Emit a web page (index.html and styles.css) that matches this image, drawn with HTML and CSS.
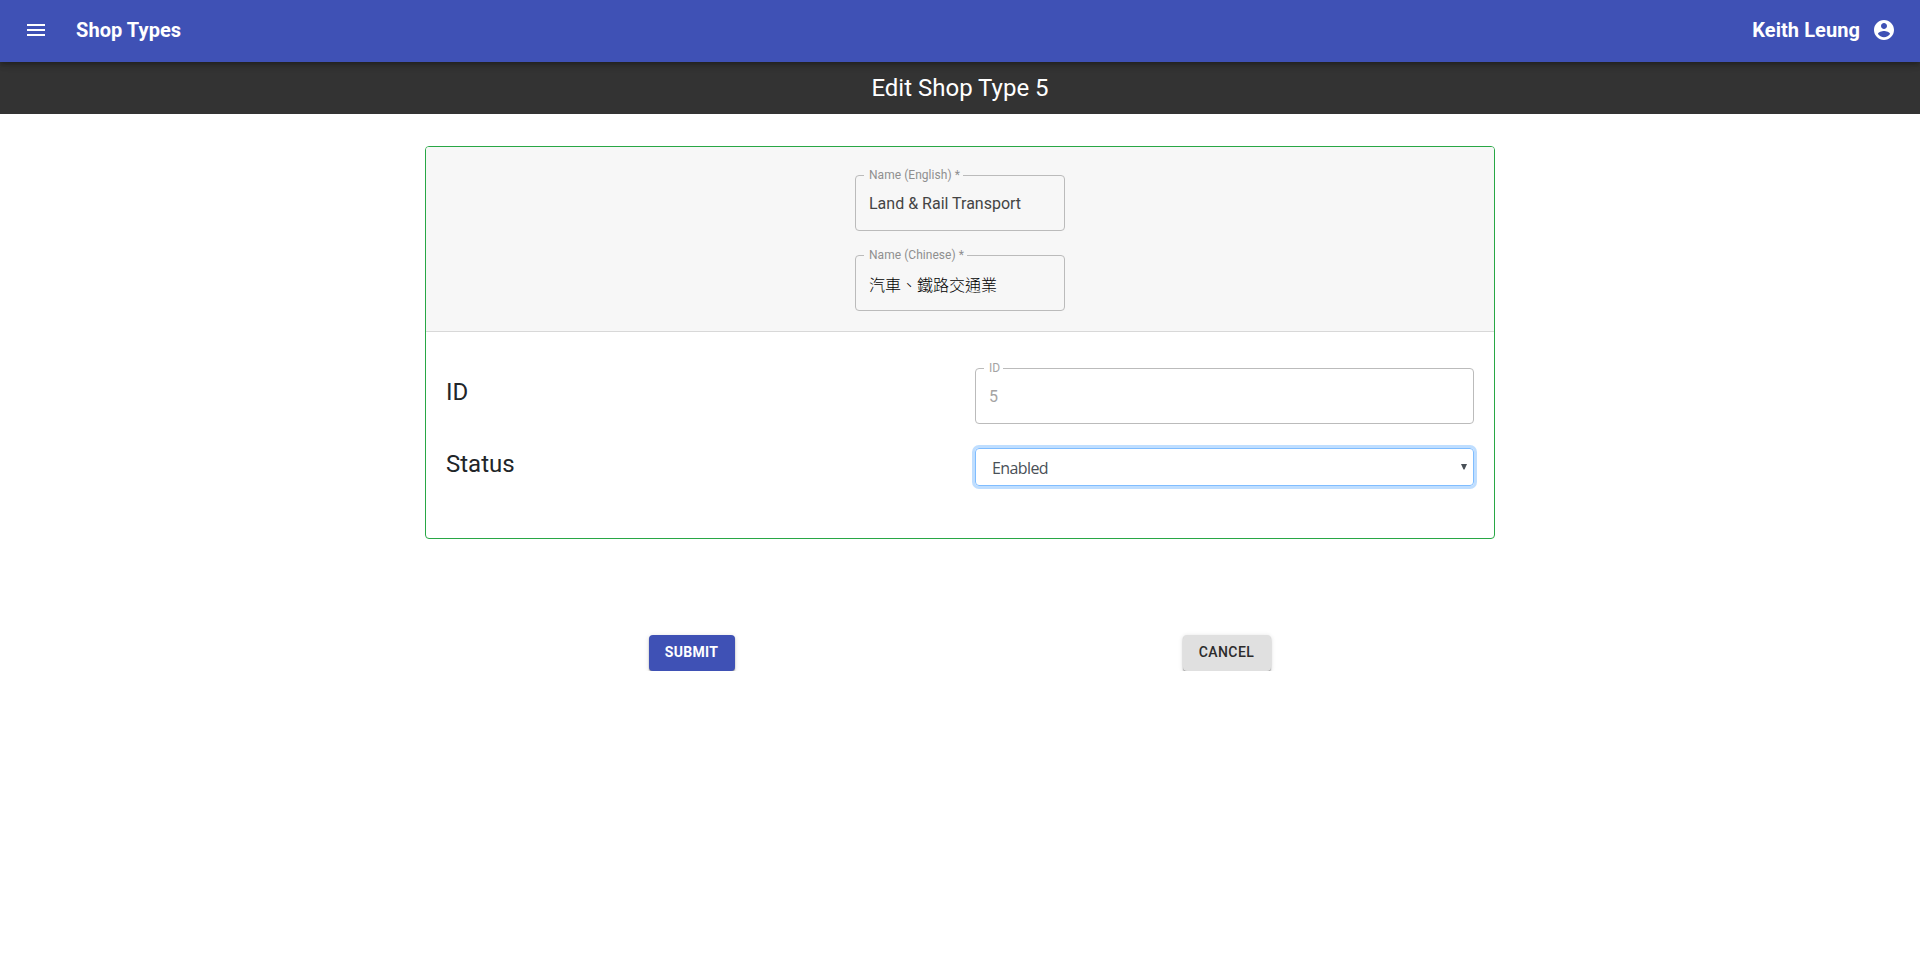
FILE: index.html
```
<!DOCTYPE html>
<html lang="en">
<head>
<meta charset="utf-8">
<title>Shop Types</title>
<link rel="stylesheet" href="styles.css">
</head>
<body>
<header class="appbar">
  <svg class="icon" viewBox="0 0 24 24"><path d="M3 18h18v-2H3v2zm0-5h18v-2H3v2zm0-7v2h18V6H3z"/></svg>
  <span class="brand">Shop Types</span>
  <span class="user">Keith Leung</span>
  <svg class="icon" viewBox="0 0 24 24"><path d="M12 2C6.48 2 2 6.48 2 12s4.480 10 10 10 10-4.480 10-10S17.520 2 12 2zm0 3c1.660 0 3 1.340 3 3s-1.340 3-3 3-3-1.340-3-3 1.340-3 3-3zm0 14.200c-2.500 0-4.710-1.280-6-3.220.030-1.990 4-3.080 6-3.080 1.990 0 5.970 1.090 6 3.080-1.290 1.940-3.500 3.220-6 3.220z"/></svg>
</header>
<h1 class="title">Edit Shop Type 5</h1>
<main class="content">
  <section class="card">
    <div class="card-header">
      <fieldset class="field"><legend class="label">Name (English) *</legend><div class="value">Land &amp; Rail Transport</div></fieldset>
      <fieldset class="field"><legend class="label">Name (Chinese) *</legend><div class="value chinese">汽車、鐵路交通業</div></fieldset>
    </div>
    <div class="card-body">
      <div class="row id-row">
        <span class="name">ID</span>
        <fieldset class="field disabled"><legend class="label">ID</legend><div class="value">5</div></fieldset>
      </div>
      <div class="row status-row">
        <span class="name">Status</span>
        <div class="select"><span>Enabled</span><svg class="arrow" viewBox="0 0 6 6"><path d="M0 0h6L3.500 5.500h-1z"/></svg></div>
      </div>
    </div>
  </section>
  <div class="actions">
    <button class="btn primary">SUBMIT</button>
    <button class="btn">CANCEL</button>
  </div>
</main>
</body>
</html>
```

FILE: styles.css
```
* { box-sizing: border-box; }
body {
  margin: 0;
  background: #fff;
  color: #212529;
  font-family: Roboto, "Noto Sans CJK TC", sans-serif;
}
.appbar {
  position: relative;
  display: flex;
  align-items: center;
  height: 62px;
  padding: 0 24px;
  background: #3f51b5;
  color: #fff;
  font-size: 20px;
  font-weight: 500;
  line-height: 24px;
  box-shadow: 0 2px 4px -1px rgba(0,0,0,.2), 0 4px 5px rgba(0,0,0,.14), 0 1px 10px rgba(0,0,0,.12);
}
.icon { width: 24px; height: 24px; fill: currentColor; margin-bottom: 2px; }
.brand { margin: 0 auto 2px 28px; font-weight: 700; letter-spacing: .07px; }
.user { margin: 0 12px 2px 0; font-weight: 700; letter-spacing: .07px; }
.title {
  margin: 0;
  height: 52px;
  background: #333;
  color: #fff;
  font-size: 24px;
  font-weight: 400;
  line-height: 53px;
  text-align: center;
}
.content { width: 1070px; margin: 32px auto 0; }
.card { height: 393px; border: 1px solid #28a745; border-radius: 4px; }
.card-header {
  display: flex;
  flex-direction: column;
  align-items: center;
  gap: 19px;
  height: 185px;
  padding-top: 23px;
  background: #f7f7f7;
  border-bottom: 1px solid #d8d8d8;
  border-radius: 3px 3px 0 0;
}
/* Outlined input: the legend sits in the gap of the top border */
.field {
  width: 210px;
  height: 61px;
  min-width: 0;
  margin: 0;
  padding: 0 8px;
  border: 1px solid #bbb;
  border-radius: 4px;
}
.label {
  padding: 0 3px 0 5px;
  color: #8f8f8f;
  font-size: 12px;
  line-height: 11px;
  letter-spacing: .04px;
}
.value {
  padding: 13px 5px 0;
  color: #444;
  font-size: 16px;
  line-height: 20px;
}
.chinese { color: #000; font-family: "Noto Sans CJK TC", sans-serif; font-weight: 300; }
.disabled .label, .disabled .value { color: #a4a4a4; }
.card-body { padding: 31px 20px 0; }
.row { display: grid; grid-template-columns: 529px 499px; }
.row .field { width: 499px; }
.name { font-size: 24px; line-height: 29px; }
.id-row { height: 85px; }
.id-row .name { padding-top: 15px; }
.status-row .name { padding-top: 2px; }
.select {
  display: flex;
  align-items: center;
  justify-content: space-between;
  height: 38px;
  padding: 2px 6px 0 16px;
  border: 1px solid #80bdff;
  border-radius: 4px;
  box-shadow: 0 0 0 3px #bfdeff;
  color: #495057;
  font: 16px "Open Sans", sans-serif;
  letter-spacing: -.6px;
}
.arrow { width: 6px; height: 6px; margin-bottom: 2px; fill: #495057; }
.actions { display: grid; grid-template-columns: 1fr 1fr; justify-items: center; margin: 96px 1px 0 -1px; }
.btn {
  width: 88px;
  height: 36px;
  padding: 0 0 2px;
  border: 0;
  border-radius: 4px;
  background: #e0e0e0;
  color: #2c2c2c;
  font: 500 14px Roboto, sans-serif;
  letter-spacing: .4px;
  box-shadow: 0 1px 1px rgba(0,0,0,.25), 0 2px 2px rgba(0,0,0,.14), 0 1px 5px rgba(0,0,0,.14);
}
.primary { width: 86px; background: #3f51b5; color: #fff; font-weight: 700; letter-spacing: .3px; }
```
